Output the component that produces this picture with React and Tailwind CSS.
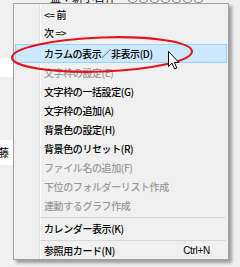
const items = [
  { label: "<= 前", h: "h-[18px]" },
  { label: "次 =>", h: "h-[18px]" },
  { gap: true },
  { label: "カラムの表示／非表示(D)", active: true },
  { label: "文字枠の設定(E)", disabled: true },
  { label: "文字枠の一括設定(G)" },
  { label: "文字枠の追加(A)" },
  { label: "背景色の設定(H)" },
  { label: "背景色のリセット(R)" },
  { label: "ファイル名の追加(F)", disabled: true },
  { label: "下位のフォルダーリスト作成", disabled: true },
  { label: "連動するグラフ作成", disabled: true },
  { separator: true, h: "h-[4px]" },
  { label: "カレンダー表示(K)", h: "h-[20px]" },
  { separator: true, h: "h-[3px]" },
  { label: "参照用カード(N)", shortcut: "Ctrl+N", h: "h-[17px]" },
]

function MenuRow({ item }) {
  if (item.gap) return <div className="h-[2px]" />
  if (item.separator) {
    return (
      <div className={`${item.h} flex items-center pl-[26px] pr-[2px]`}>
        <div className="h-px w-full bg-[#d7d7d7]" />
      </div>
    )
  }
  return (
    <div className={`${item.h || "h-[19px]"} flex items-stretch px-px`}>
      <div
        className={`flex flex-1 items-center pl-[28px] pr-[16px] border ${
          item.active ? "bg-[#cce8ff] border-[#99d1ff]" : "border-transparent"
        } ${item.disabled ? "text-[#9a9a9a]" : "text-black"}`}
      >
        <span className="flex-1 whitespace-nowrap tracking-[-0.4px] font-medium">{item.label}</span>
        {item.shortcut && (
          <span className="font-['Liberation_Sans',sans-serif] tracking-[-0.3px]">{item.shortcut}</span>
        )}
      </div>
    </div>
  )
}

export default function App() {
  return (
    <div className="relative w-[240px] h-[267px] overflow-hidden bg-[#f0f0f0] font-['Noto_Sans_CJK_JP',sans-serif] text-[10px] leading-none">
      {/* page behind the menu */}
      <div className="h-[3px] overflow-hidden pl-[50px]">
        <div className="-mt-[8px] text-[11px] text-black whitespace-nowrap">益：新小日件　○○○○○○○</div>
      </div>
      <div className="flex flex-col pt-[55px] w-[13px]">
        <div className="h-[19px] bg-white" />
        <div className="h-[63px]" />
        <div className="h-[25px] bg-white flex items-center overflow-hidden">
          <span className="-ml-[2px] text-[11px]">藤</span>
        </div>
      </div>

      {/* context menu */}
      <div className="absolute left-[13px] top-[3px] w-[216px] h-[257px] bg-[#f0f0f0] border border-[#a0a0a0] shadow-[3px_3px_3px_rgba(0,0,0,0.35)]">
        <div className="absolute left-[25px] top-0 bottom-0 w-px bg-[#e2e2e2]" />
        <div className="absolute left-[26px] top-0 bottom-0 w-px bg-white" />
        <div className="relative flex flex-col pt-[2px]">
          {items.map((item, i) => (
            <MenuRow key={i} item={item} />
          ))}
        </div>
      </div>

      {/* annotation ellipse */}
      <svg className="absolute inset-0" width="240" height="267" viewBox="0 0 240 267">
        <ellipse cx="102" cy="54.5" rx="90" ry="17" fill="none" stroke="#e3151c" strokeWidth="2.2" transform="rotate(-2 102 54.5)" />
      </svg>

      {/* mouse pointer */}
      <svg className="absolute left-[168px] top-[51px]" width="12" height="20" viewBox="0 0 12 20">
        <path d="M0.5 0.5 L0.5 15.5 L4 12.2 L6.6 18 L8.8 17 L6.3 11.4 L10.8 11.4 Z" fill="#fff" stroke="#000" strokeWidth="1" strokeLinejoin="round" />
      </svg>
    </div>
  )
}
